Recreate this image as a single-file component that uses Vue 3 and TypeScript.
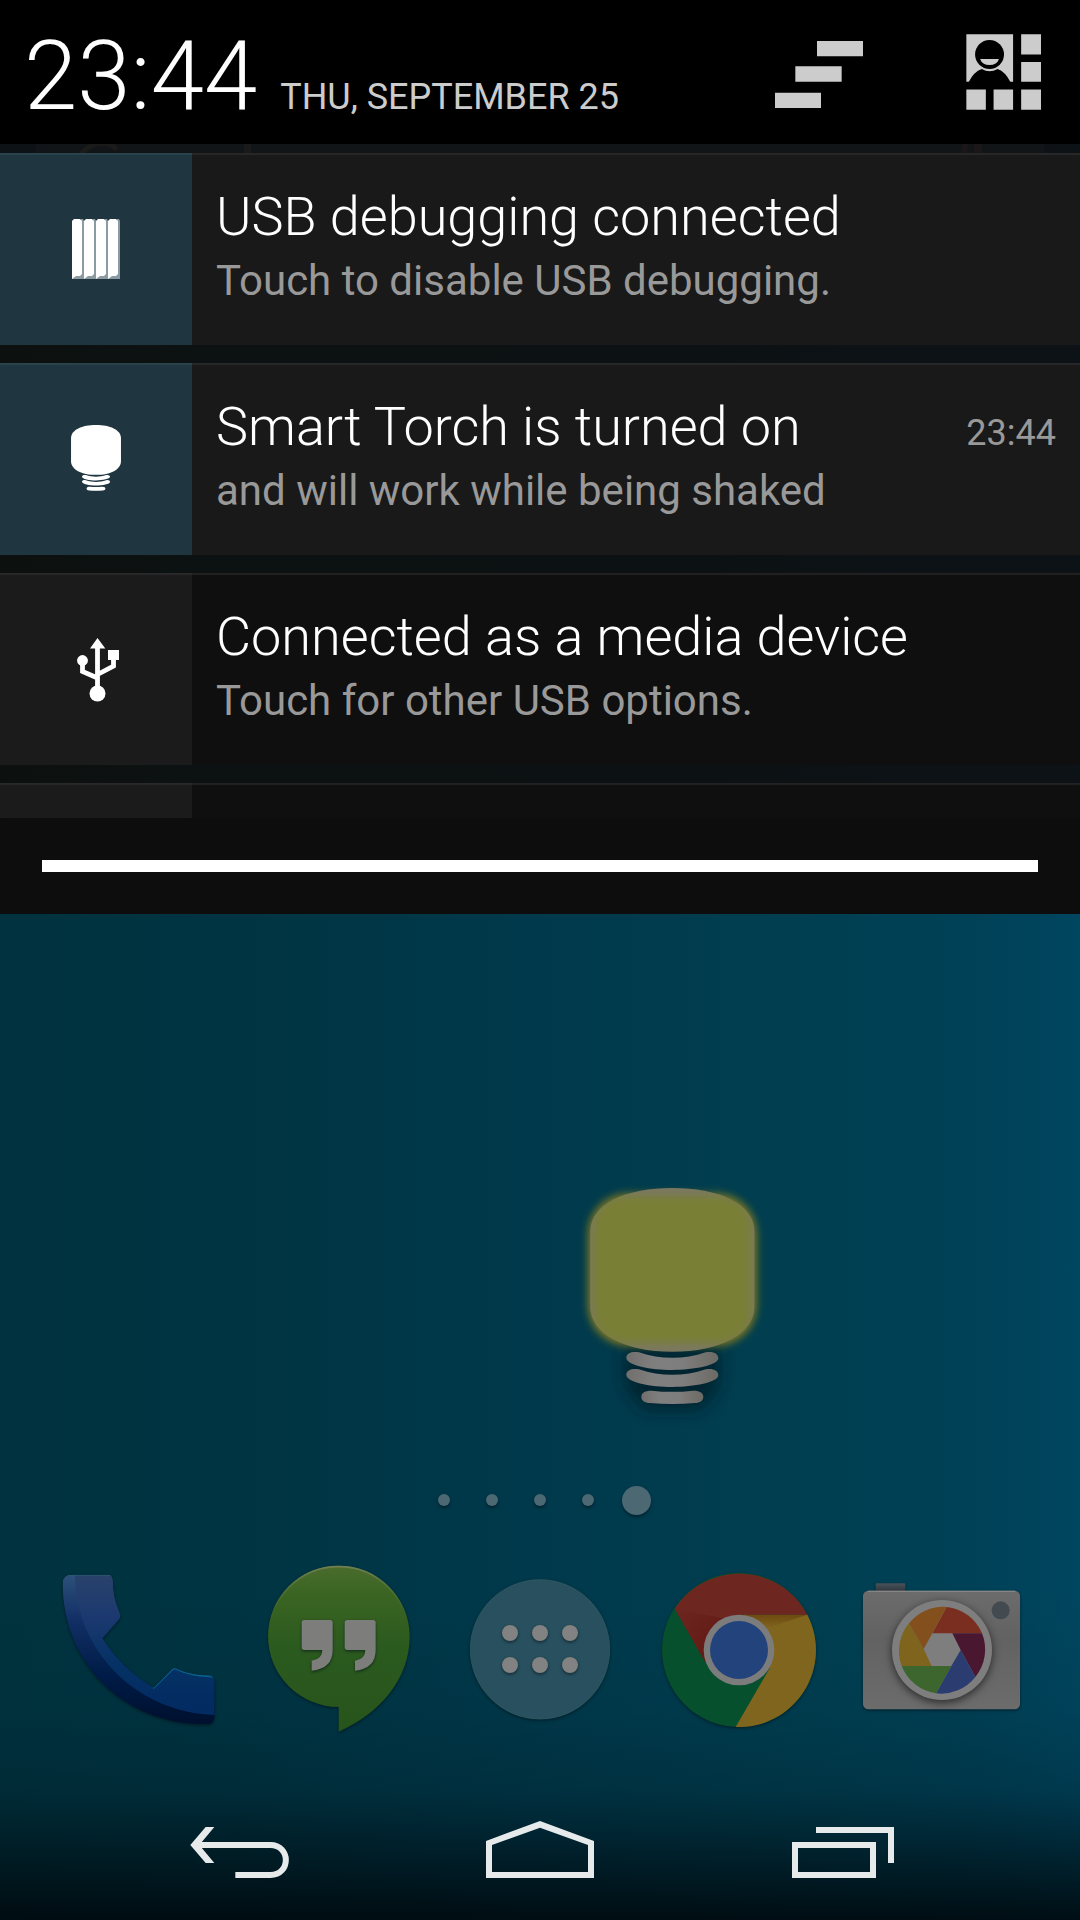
<script setup lang="ts">
interface Notice {
  id: string
  title: string
  text: string
  time?: string
  ongoing: boolean
}

const notices: Notice[] = [
  { id: 'debug', title: 'USB debugging connected', text: 'Touch to disable USB debugging.', ongoing: true },
  { id: 'torch', title: 'Smart Torch is turned on', text: 'and will work while being shaked', time: '23:44', ongoing: true },
  { id: 'usb', title: 'Connected as a media device', text: 'Touch for other USB options.', ongoing: false },
]

const pages = [1, 2, 3, 4, 5]
const currentPage = 5

const bulb = 'M90 215C90 130 200 84 336 84S582 130 582 215V440C582 520 480 575 336 575S90 520 90 440Z'
const rings = [
  'M198 593C198 579 216 573 236 577C300 599 372 599 436 577C458 573 474 580 474 595C474 616 400 630 336 630S198 616 198 593Z',
  'M198 644C198 630 216 624 236 628C300 650 372 650 436 628C458 624 474 631 474 646C474 667 400 681 336 681S198 667 198 644Z',
  'M243 710C243 697 258 691 274 692Q336 699 398 692C416 691 429 698 429 710C429 723 418 728 404 729Q336 735 268 729C254 728 243 723 243 710Z',
]
</script>

<template>
  <main class="screen">
    <section class="shade" aria-label="Notifications">
      <header class="bar">
        <div class="when">
          <time class="clock">23:44</time>
          <span class="date">THU, SEPTEMBER 25</span>
        </div>
        <button class="tool clear" aria-label="Clear notifications">
          <svg width="88" height="67" viewBox="105 121 264 201" fill="#ccc">
            <path d="M231 121h138v46H231zM166 197h139v46H166zM105 276h138v46H105z" />
          </svg>
        </button>
        <button class="tool" aria-label="Quick settings">
          <svg width="75" height="76" viewBox="679 103 223 226">
            <path fill="#ccc" d="M680 104h139v141H680zM843 104h59v60h-59zM843 186h59v59h-59zM680 268h58v60h-58zM761 268h58v60h-58zM843 268h59v60h-59z" />
            <circle cx="749" cy="164" r="43" />
            <path fill="#ccc" d="M721 177h56q-6 18-28 18t-28-18z" />
            <path d="M687 246Q702 215 726 207Q749 220 773 207Q796 215 811 246z" />
          </svg>
        </button>
      </header>

      <div class="strip">
        <svg width="180" height="9" viewBox="72 0 180 9">
          <path fill="none" stroke="#1b1b1a" stroke-width="5" d="M80 11Q98-9 117 5" />
          <path fill="#1a1a1a" d="M244 0h7v9h-7z" />
        </svg>
        <svg width="22" height="9" viewBox="961 0 22 9">
          <path fill="#1b1718" d="M963 0h6l-2 9h-6zM974 0h8v9h-8z" />
        </svg>
      </div>
      <ul class="list">
        <li v-for="n in notices" :key="n.id">
          <button class="notice" :class="{ ongoing: n.ongoing }">
            <span class="badge">
              <svg v-if="n.id === 'debug'" width="48" height="60" viewBox="0 0 48 60">
                <g v-for="i in 4" :key="i">
                  <path fill="#8c9ba1" :d="`M${i * 12 - 3} 0h2l1 2v58h-12z`" />
                  <path fill="#fff" :d="`M${i * 12 - 12} 2l2-2h6l2 2v53l-2 2h-4l-4 3z`" />
                </g>
              </svg>
              <svg v-else-if="n.id === 'torch'" width="50" height="68" viewBox="90 84 492 670" fill="#fff">
                <path :d="bulb" />
                <path v-for="r in rings" :key="r" :d="r" />
              </svg>
              <svg v-else width="48" height="66" viewBox="72 636 48 66" fill="#fff">
                <path d="M97.500 638l7.800 10.500H90zM108 650h11v10h-11z" />
                <circle cx="82.500" cy="660.500" r="5.400" />
                <circle cx="97.500" cy="693.500" r="8" />
                <path fill="none" stroke="#fff" stroke-width="4.800" d="M97.500 646v44M82.500 662v9.500l15 6.500M113.500 658v8l-16 8.500" />
              </svg>
            </span>
            <span class="body">
              <span class="line">
                <span class="title">{{ n.title }}</span>
                <time v-if="n.time" class="time">{{ n.time }}</time>
              </span>
              <span class="text">{{ n.text }}</span>
            </span>
          </button>
        </li>
        <li class="notice peek"><span class="badge" /></li>
      </ul>
      <div class="grip"><div class="handle" /></div>
    </section>

    <section class="home" aria-label="Home screen">
      <button class="torch" aria-label="Smart Torch">
        <svg width="220" height="270" viewBox="5 0 660 810">
          <defs>
            <filter id="soft" x="-30%" y="-30%" width="160%" height="160%"><feGaussianBlur stdDeviation="13" /></filter>
            <filter id="softer" x="-60%" y="-60%" width="220%" height="220%"><feGaussianBlur stdDeviation="24" /></filter>
            <clipPath id="bulbClip"><path :d="bulb" /></clipPath>
            <linearGradient id="metal">
              <stop offset="0" stop-color="#706f6d" /><stop offset=".3" stop-color="#807f7f" />
              <stop offset=".6" stop-color="#7f7e7e" /><stop offset="1" stop-color="#6c6a64" />
            </linearGradient>
          </defs>
          <path fill="#001a25" opacity=".75" filter="url(#softer)" d="M190 560H480L475 680L420 750H253L195 680z" />
          <rect x="84" y="102" width="504" height="454" rx="120" fill="#8a7e1c" filter="url(#soft)" />
          <path v-for="r in rings" :key="r" :d="r" fill="url(#metal)" />
          <path :d="bulb" fill="#7b7862" />
          <g clip-path="url(#bulbClip)">
            <rect x="98" y="108" width="476" height="442" rx="95" filter="url(#soft)" fill="#797f35" />
          </g>
        </svg>
      </button>

      <div class="pages" aria-label="Pages">
        <span v-for="p in pages" :key="p" class="page"><i :class="{ on: p === currentPage }" /></span>
      </div>

      <div class="dock">
        <button aria-label="Phone">
          <svg viewBox="20 30 540 540">
            <defs>
              <linearGradient id="phFace" x1="0" y1="0" x2="0" y2="1">
                <stop offset="0" stop-color="#2a426a" /><stop offset=".3" stop-color="#1c3970" />
                <stop offset=".6" stop-color="#063265" /><stop offset="1" stop-color="#022b61" />
              </linearGradient>
              <linearGradient id="phSide" x1="0" y1="0" x2="0" y2="1">
                <stop offset="0" stop-color="#2d5279" /><stop offset=".3" stop-color="#122f66" />
                <stop offset=".65" stop-color="#001c48" /><stop offset="1" stop-color="#000f2c" />
              </linearGradient>
              <clipPath id="phClip">
                <path d="M67 100Q67 74 95 74H205Q216 76 217 95C218 150 232 170 240 195Q241 203 232 212L186 265C230 335 280 375 340 414L396 357Q402 353 410 357C450 375 480 375 505 376Q522 378 523 395V500Q521 523 495 523C250 523 67 340 67 100Z" />
              </clipPath>
            </defs>
            <g class="cast">
              <g clip-path="url(#phClip)">
                <path fill="url(#phSide)" d="M60 70H530V530H60z" />
                <path fill="url(#phFace)" d="M104 70C100 290 280 490 530 495V70z" />
                <path fill="none" stroke="#2f6070" stroke-width="5" d="M75 75H215" opacity=".7" />
                <path fill="none" stroke="#08618a" stroke-width="6" d="M338 415L396 358Q402 353 410 357C450 377 480 377 520 380" />
              </g>
            </g>
          </svg>
        </button>
        <button aria-label="Hangouts">
          <svg viewBox="625 30 540 540">
            <defs>
              <linearGradient id="hg" x1="0" y1="0" x2="0" y2="1">
                <stop offset="0" stop-color="#4a6c2c" /><stop offset=".18" stop-color="#3a6422" />
                <stop offset=".5" stop-color="#2b5a1f" /><stop offset="1" stop-color="#27541b" />
              </linearGradient>
              <linearGradient id="hgEdge" x1="0" y1="0" x2="0" y2="1">
                <stop offset="0" stop-color="#6f7f50" /><stop offset=".35" stop-color="#3f682a" stop-opacity="0" />
              </linearGradient>
            </defs>
            <path class="cast" fill="url(#hg)" d="M897 47A212 212 0 0 0 897 471V545C1022 490 1110 385 1110 260A213 213 0 0 0 897 47Z" />
            <path fill="none" stroke="url(#hgEdge)" stroke-width="5" d="M897 50A210 210 0 0 0 897 470V540C1020 488 1107 385 1107 260A210 210 0 0 0 897 50Z" />
            <path class="cast" fill="#7d7d7b" d="M794 210H871Q879 210 879 218V300Q879 356 816 362V332Q848 328 848 300H794Q786 300 786 292V218Q786 210 794 210ZM923 210H1000Q1008 210 1008 218V300Q1008 356 946 362V332Q977 328 977 300H923Q915 300 915 292V218Q915 210 923 210Z" />
          </svg>
        </button>
        <button aria-label="All apps">
          <svg viewBox="90 300 540 540">
            <circle class="cast" cx="360" cy="568" r="209" fill="#28505e" stroke="#35606a" stroke-width="2" />
            <g class="cast" fill="#828282">
              <template v-for="y in [519, 615]" :key="y">
                <circle v-for="x in [270, 360, 450]" :key="x" :cx="x" :cy="y" r="24" />
              </template>
            </g>
          </svg>
        </button>
        <button aria-label="Chrome">
          <svg viewBox="35 30 540 540">
            <defs>
              <linearGradient id="chShade" x1="0" y1="0" x2="1" y2="1">
                <stop offset="0" stop-color="#5a0f0c" stop-opacity="0" /><stop offset="1" stop-color="#5a0f0c" />
              </linearGradient>
              <linearGradient id="chGold" x1="0" y1="0" x2="0" y2="1">
                <stop offset="0" stop-color="#6d4a10" /><stop offset="1" stop-color="#80651f" />
              </linearGradient>
            </defs>
            <circle class="cast" cx="296" cy="300" r="231" fill="#07502d" />
            <path fill="#80651f" d="M296 194H501A231 231 0 0 1 286 531L388 355z" />
            <path fill="url(#chGold)" d="M296 194H501L380 235z" />
            <path fill="#6e2720" d="M103 176A231 231 0 0 1 501 194H296L194 335z" />
            <path fill="url(#chShade)" d="M103 176L250 205L194 335z" opacity=".7" />
            <circle cx="296" cy="300" r="106" fill="#7c7c7c" />
            <circle cx="296" cy="300" r="87" fill="#22437c" />
          </svg>
        </button>
        <button aria-label="Camera">
          <svg viewBox="640 30 540 540">
            <defs>
              <linearGradient id="camBody" x1="0" y1="0" x2="0" y2="1">
                <stop offset="0" stop-color="#6c6c6c" /><stop offset=".4" stop-color="#626262" /><stop offset="1" stop-color="#6c6c6c" />
              </linearGradient>
              <linearGradient id="camKey" x1="0" y1="0" x2="0" y2="1">
                <stop offset="0" stop-color="#49535a" /><stop offset="1" stop-color="#2c343b" />
              </linearGradient>
            </defs>
            <g class="cast">
              <path fill="url(#camKey)" d="M708 104q0-4 4-4h81q4 0 4 4v22h-89z" />
              <rect x="670" y="122" width="471" height="356" rx="16" fill="url(#camBody)" />
              <path d="M684 124H1127" stroke="#868686" stroke-width="4" />
            </g>
            <circle cx="1083" cy="181" r="27" fill="#434b51" />
            <circle class="deep" cx="907" cy="300" r="150" fill="#7e7e7e" />
            <path fill="#792e1f" d="M921 171A130 130 0 0 1 1027 250H878z" />
            <path fill="#4a1730" d="M938 250H1027A130 130 0 0 1 1007 381L963 300z" />
            <path fill="#2a3c70" d="M1007 381A130 130 0 0 1 889 430L935 348L963 300z" />
            <path fill="#3d662f" d="M889 430A130 130 0 0 1 786 348H935z" />
            <path fill="#7e641c" d="M786 348A130 130 0 0 1 808 220L852 297L876 348z" />
            <path fill="#83501d" d="M808 220A130 130 0 0 1 921 171L878 250L852 297z" />
          </svg>
        </button>
      </div>

      <nav class="keys">
        <button aria-label="Back">
          <svg width="108" height="64" viewBox="71 78 324 192" fill="#e6eaeb">
            <path d="M90 165L136 111H162L117 165L162 219H136z" />
            <path fill="none" stroke="#e6eaeb" stroke-width="18" d="M112 165H330C392 165 392 255 330 255H225" />
          </svg>
        </button>
        <button aria-label="Home">
          <svg width="108" height="64" viewBox="978 78 324 192" fill="#e6eaeb">
            <path fill-rule="evenodd" d="M978 153L1140 93L1302 153V264H978zM996 165V246H1284V165L1140 113z" />
          </svg>
        </button>
        <button aria-label="Recent apps">
          <svg width="108" height="64" viewBox="564 78 324 192" fill="#e6eaeb">
            <path fill-rule="evenodd" d="M576 156H828V264H576zM594 174V246H810V174zM648 111H882V219H864V129H648z" />
          </svg>
        </button>
      </nav>
    </section>
  </main>
</template>

<style>
body {
  margin: 0;
  background: #00394a;
}
</style>

<style scoped>
.screen {
  display: flex;
  flex-direction: column;
  min-height: 100vh;
  font-family: Roboto, 'Liberation Sans', sans-serif;
  background:
    linear-gradient(to top, rgba(0, 8, 12, 0.9) 0, rgba(0, 12, 18, 0.62) 60px, rgba(0, 20, 30, 0.25) 130px, rgba(0, 30, 42, 0.1) 210px, transparent 330px),
    linear-gradient(90deg, #00333f 0%, #003442 22%, #00394b 48%, #003f51 75%, #004157 90%, #00465f 100%);
}

button {
  display: block;
  padding: 0;
  border: 0;
  background: none;
  font: inherit;
  color: inherit;
  text-align: left;
  cursor: pointer;
}

svg {
  display: block;
}

.shade {
  background: linear-gradient(90deg, #0c1110, #0c1216);
}

.bar {
  display: flex;
  align-items: center;
  height: 144px;
  padding: 0 39px 0 24px;
  box-sizing: border-box;
  background: #000;
  white-space: nowrap;
}

.when {
  display: flex;
  align-items: baseline;
  gap: 23px;
  margin-right: auto;
  padding-top: 8px;
}

.clock {
  font-size: 96px;
  line-height: 96px;
  font-weight: 300;
  color: #fff;
}

.date {
  font-size: 36px;
  line-height: 42px;
  color: #ccc;
}

.clear {
  margin-right: 103px;
  padding-top: 4px;
}

.strip {
  display: flex;
  justify-content: space-between;
  height: 9px;
  padding: 0 97px 0 72px;
  background: linear-gradient(90deg, #0d1216 36px, #121517 36px, #111517 calc(100% - 36px), #0d1216 calc(100% - 36px));
}

.list {
  display: flex;
  flex-direction: column;
  gap: 18px;
  margin: 0;
  padding: 0;
  list-style: none;
}

.notice {
  display: flex;
  width: 100%;
  height: 192px;
  background: #0f0f0f;
  box-shadow: inset 0 2px 1px #222;
}

.badge {
  display: flex;
  flex: none;
  align-items: center;
  justify-content: center;
  width: 192px;
  background: #1b1b1b;
  box-shadow: inset 0 2px 1px #292929;
}

.ongoing {
  background: #191919;
  box-shadow: inset 0 2px 1px #282828;
}

.ongoing .badge {
  background: #1f3640;
  box-shadow: inset 0 2px 1px #2b434d;
}

.peek {
  height: 35px;
}

.body {
  display: flex;
  flex: 1;
  flex-direction: column;
  gap: 8px;
  min-width: 0;
  padding: 32px 24px 0;
}

.line {
  display: flex;
  align-items: baseline;
  justify-content: space-between;
}

.title {
  font-size: 54px;
  line-height: 64px;
  font-weight: 300;
  color: #fff;
}

.text {
  font-size: 42px;
  line-height: 48px;
  color: #999;
}

.time {
  font-size: 36px;
  line-height: 42px;
  color: #999;
}

.grip {
  padding: 42px;
  background: #0d0d0d;
}

.handle {
  height: 12px;
  background: #fff;
}

.home {
  display: flex;
  flex: 1;
  flex-direction: column;
  justify-content: flex-end;
}

.torch {
  align-self: flex-start;
  margin: 0 0 46px 52%;
}

.pages {
  display: flex;
  justify-content: center;
  margin-bottom: 36px;
}

.page {
  display: flex;
  align-items: center;
  justify-content: center;
  width: 48px;
  height: 48px;
}

.page i {
  width: 12px;
  height: 12px;
  border-radius: 50%;
  background: #4c6872;
  box-shadow: 0 2px 3px rgba(0, 20, 30, 0.6);
}

.page .on {
  width: 29px;
  height: 29px;
}

.dock {
  display: grid;
  grid-template-columns: repeat(5, 1fr);
  justify-items: center;
  margin-bottom: 36px;
  padding: 0 36px;
}

.dock svg {
  width: 180px;
  height: 180px;
}

.cast {
  filter: drop-shadow(0 4px 5px rgba(0, 15, 22, 0.6));
}

.deep {
  filter: drop-shadow(0 8px 12px rgba(0, 0, 0, 0.6));
}

.keys {
  display: flex;
  justify-content: center;
  height: 144px;
}

.keys button {
  display: flex;
  align-items: center;
  justify-content: center;
  width: 28%;
}
</style>
